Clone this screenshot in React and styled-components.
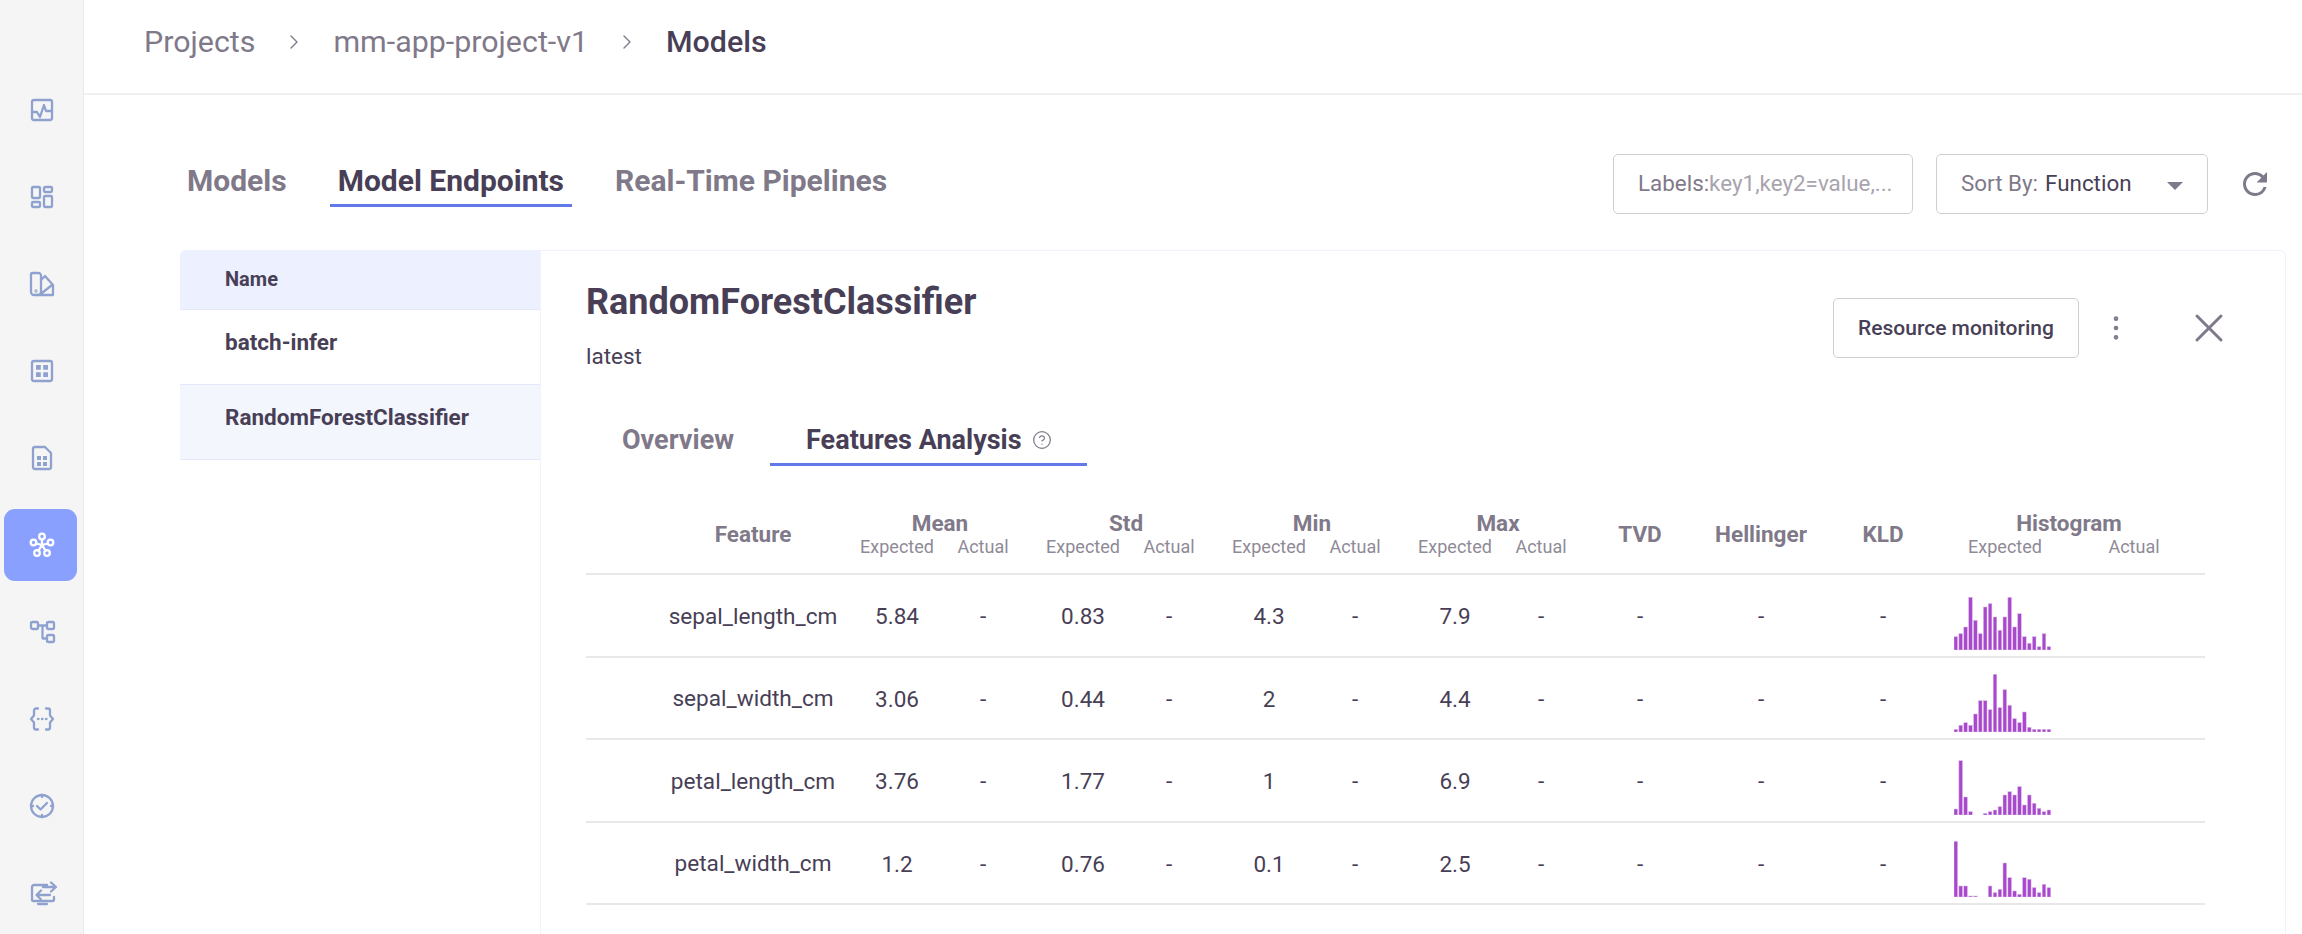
import styled, { createGlobalStyle } from "styled-components";
import { ChevronRight, CircleHelp, EllipsisVertical, X } from "lucide-react";

const GlobalStyle = createGlobalStyle`
	html, body {
		margin: 0;
		padding: 0;
		background: #fff;
	}
	body {
		font-family: Roboto, "Liberation Sans", sans-serif;
		color: #483f56;
	}
	* {
		box-sizing: border-box;
	}
`;

const navIcons = [
	<>
		<rect x="2" y="2" width="20" height="20" rx="2" />
		<path d="M3 14h4l3 5 4-12 2 6h5" />
	</>,
	<>
		<rect x="2" y="2" width="8" height="11" rx="1" />
		<rect x="14" y="2" width="8" height="5" rx="1" />
		<rect x="14" y="11" width="8" height="11" rx="1" />
		<rect x="2" y="17" width="8" height="5" rx="1" />
	</>,
	<>
		<path d="M2.500 1h6a2.500 2.500 0 0 1 2.500 2.500V20a3 3 0 0 1-3 3H4a3 3 0 0 1-3-3V2.500A1.500 1.500 0 0 1 2.500 1z" />
		<path d="M11 8l4-4 8 9v10H8M12 21l10-8" />
		<circle cx="6" cy="19" r=".5" />
	</>,
	<>
		<rect x="2" y="2" width="20" height="20" rx="2" />
		<path d="M6 6h4.800v4.800H6zM13.200 6H18v4.800h-4.800zM6 13.200h4.800V18H6zM13.200 13.200H18V18h-4.800z" fill="currentColor" stroke="none" />
	</>,
	<>
		<path d="M5 1h10l6 6v14a2 2 0 0 1-2 2H5a2 2 0 0 1-2-2V3a2 2 0 0 1 2-2z" />
		<path d="M7 10h4v4H7zM13 10h4v4h-4zM7 16h4v4H7zM13 16h4v4h-4z" fill="currentColor" stroke="none" />
	</>,
	<>
		<circle cx="12" cy="3.500" r="2.800" />
		<circle cx="3.500" cy="9.500" r="2.800" />
		<circle cx="20.500" cy="9.500" r="2.800" />
		<circle cx="7" cy="20" r="2.800" />
		<circle cx="17" cy="20" r="2.800" />
		<path d="M12 6v6M6 10.500l6 1.500 6-1.500M8.300 17.800 12 12l3.700 5.800" />
	</>,
	<>
		<rect x="1" y="2" width="7" height="7" rx="1.500" />
		<rect x="17" y="2" width="7" height="7" rx="1.500" />
		<rect x="17" y="15" width="7" height="7" rx="1.500" />
		<path d="M8 5.500h9M12.500 5.500V18a.5.5 0 0 0 .5.5h4" />
	</>,
	<>
		<path d="M8 1.500H6a2 2 0 0 0-2 2v5L1 12l3 3.500v5a2 2 0 0 0 2 2h2" />
		<path d="M16 1.500h2a2 2 0 0 1 2 2v5l3 3.500-3 3.500v5a2 2 0 0 1-2 2h-2" />
		<path d="M8 12h.5M12 12h.5M16 12h.5" />
	</>,
	<>
		<circle cx="12" cy="12" r="11" />
		<path d="M7 12l3.500 3.500L17 9M12 1v2M12 21v2M1 12h2M21 12h2" />
	</>,
	<>
		<path d="M17 4H4a2 2 0 0 0-2 2v13a1 1 0 0 0 1 1h20a1 1 0 0 0 1-1v-3" />
		<path d="M13 6h12M21 1.500 26 6l-5 4.500M20 14H7M11 9.500 6.500 14l4.500 4.500M8 23h9" />
	</>,
];

const rows = [
	{
		name: "sepal_length_cm",
		mean: "5.84",
		std: "0.83",
		min: "4.3",
		max: "7.9",
		bars: [13.3, 16.3, 23, 52.7, 29.7, 16.3, 43, 46.3, 33, 19.7, 33, 52.7, 23, 36.3, 13.3, 6.7, 13.3, 3.3, 16.3, 3.3],
	},
	{
		name: "sepal_width_cm",
		mean: "3.06",
		std: "0.44",
		min: "2",
		max: "4.4",
		bars: [2.7, 6.7, 9.3, 6.7, 18, 31.3, 31.3, 22.3, 57.7, 24.3, 42.3, 26.7, 13.3, 9.3, 20, 4.7, 2.7, 2.7, 2.7, 2.7],
	},
	{
		name: "petal_length_cm",
		mean: "3.76",
		std: "1.77",
		min: "1",
		max: "6.9",
		bars: [6, 54.3, 18, 3.3, 0, 0, 1.7, 3.3, 5, 8.3, 20, 23.3, 20, 28.3, 10, 20, 11.7, 6.7, 3.3, 5],
	},
	{
		name: "petal_width_cm",
		mean: "1.2",
		std: "0.76",
		min: "0.1",
		max: "2.5",
		bars: [55.7, 11, 11, 1, 1, 0, 0, 11, 4.3, 7.7, 34, 19.3, 6, 2.7, 19.3, 17.7, 9.3, 4.3, 12.7, 9.3],
	},
];

const groups = ["Mean", "Std", "Min", "Max"];

function Histogram({ bars }) {
	return (
		<HistogramSvg width="100" height="60" viewBox="0 0 100 60">
			{bars.map((h, i) =>
				h > 0 ? <rect key={i} x={i * 4.9} y={60 - h} width="3.6" height={h} /> : null
			)}
		</HistogramSvg>
	);
}

function App() {
	return (
		<Page>
			<GlobalStyle />
			<Sidebar>
				{navIcons.map((icon, i) => (
					<NavItem key={i} $active={i === 5}>
						<NavIcon viewBox="0 0 26 24">{icon}</NavIcon>
					</NavItem>
				))}
			</Sidebar>
			<Main>
				<Breadcrumbs>
					<Crumb>Projects</Crumb>
					<ChevronRight size={24} strokeWidth={1.4} />
					<Crumb>mm-app-project-v1</Crumb>
					<ChevronRight size={24} strokeWidth={1.4} />
					<Crumb $current>Models</Crumb>
				</Breadcrumbs>
				<Content>
					<TopBar>
						<Tabs>
							<Tab>Models</Tab>
							<Tab $active>Model Endpoints</Tab>
							<Tab>Real-Time Pipelines</Tab>
						</Tabs>
						<Filters>
							<LabelsBox>
								Labels:<Placeholder>key1,key2=value,...</Placeholder>
							</LabelsBox>
							<SortBox>
								Sort By: <SortValue>Function</SortValue>
								<Caret />
							</SortBox>
							<RefreshIcon viewBox="0 0 24 24">
								<path d="M17.65 6.35A7.958 7.958 0 0012 4c-4.420 0-7.990 3.580-7.990 8s3.570 8 7.990 8c3.730 0 6.840-2.550 7.730-6h-2.080A5.990 5.990 0 0112 18c-3.310 0-6-2.690-6-6s2.690-6 6-6c1.660 0 3.140.690 4.220 1.780L13 11h7V4l-2.350 2.350z" />
							</RefreshIcon>
						</Filters>
					</TopBar>
					<Body>
						<List>
							<ListHead>Name</ListHead>
							<ListRow>batch-infer</ListRow>
							<ListRow $selected>RandomForestClassifier</ListRow>
						</List>
						<Panel>
							<PanelHead>
								<div>
									<PanelTitle>RandomForestClassifier</PanelTitle>
									<PanelTag>latest</PanelTag>
								</div>
								<PanelActions>
									<OutlineButton>Resource monitoring</OutlineButton>
									<Kebab>
										<EllipsisVertical size={32} strokeWidth={1.5} />
									</Kebab>
									<CloseBtn>
										<X size={48} strokeWidth={1.5} />
									</CloseBtn>
								</PanelActions>
							</PanelHead>
							<DetailTabs>
								<DetailTab>Overview</DetailTab>
								<DetailTab $active>
									Features Analysis
									<CircleHelp size={20} strokeWidth={1.5} />
								</DetailTab>
							</DetailTabs>
							<Table>
								<HeadRow>
									<FeatureHead>Feature</FeatureHead>
									{groups.map((g) => (
										<Group key={g}>
											<GroupTitle>{g}</GroupTitle>
											<SubLabel>Expected</SubLabel>
											<SubLabel>Actual</SubLabel>
										</Group>
									))}
									<MetricHead $w={112}>TVD</MetricHead>
									<MetricHead $w={130}>Hellinger</MetricHead>
									<MetricHead $w={114}>KLD</MetricHead>
									<HistGroup>
										<GroupTitle>Histogram</GroupTitle>
										<SubLabel>Expected</SubLabel>
										<SubLabel>Actual</SubLabel>
									</HistGroup>
								</HeadRow>
								{rows.map((r) => (
									<Row key={r.name}>
										<FeatureCell>{r.name}</FeatureCell>
										{[r.mean, r.std, r.min, r.max].map((v, i) => (
											<Pair key={i}>
												<Cell>{v}</Cell>
												<Cell>-</Cell>
											</Pair>
										))}
										<Metric $w={112}>-</Metric>
										<Metric $w={130}>-</Metric>
										<Metric $w={114}>-</Metric>
										<Histogram bars={r.bars} />
									</Row>
								))}
							</Table>
						</Panel>
					</Body>
				</Content>
			</Main>
		</Page>
	);
}

export default App;

const Page = styled.div`
	display: flex;
	height: 934px;
	width: 2302px;
	overflow: hidden;
`;

const Sidebar = styled.nav`
	width: 84px;
	flex: none;
	background: #f5f5f5;
	border-right: 1px solid #e9e9e9;
	padding: 74px 0 0 4px;
	display: flex;
	flex-direction: column;
	gap: 15px;
`;

const NavItem = styled.div`
	width: 73px;
	height: 72px;
	padding-left: 5px;
	border-radius: 11px;
	display: flex;
	align-items: center;
	justify-content: center;
	color: ${(p) => (p.$active ? "#ffffff" : "#8fa2cf")};
	background: ${(p) => (p.$active ? "#8aa0ff" : "transparent")};
`;

const NavIcon = styled.svg`
	width: 26px;
	height: 24px;
	fill: none;
	stroke: currentColor;
	stroke-width: 2.300;
	stroke-linecap: round;
	stroke-linejoin: round;
	overflow: visible;
`;

const Main = styled.main`
	flex: 1;
	min-width: 0;
`;

const Breadcrumbs = styled.div`
	height: 95px;
	border-bottom: 2px solid #f0f0f0;
	padding: 0 0 10px 60px;
	display: flex;
	align-items: center;
	gap: 27px;
	color: #7f7989;
`;

const Crumb = styled.span`
	font-size: 30.400px;
	font-weight: ${(p) => (p.$current ? 500 : 400)};
	color: ${(p) => (p.$current ? "#483f56" : "#7f7989")};
`;

const Content = styled.div`
	padding: 0 16px 0 95px;
`;

const TopBar = styled.div`
	display: flex;
	justify-content: space-between;
	height: 155px;
	padding-top: 59px;
`;

const Tabs = styled.div`
	display: flex;
	gap: 35px;
	height: 54px;
`;

const Tab = styled.div`
	padding: 0 8px;
	font-size: 30px;
	font-weight: 700;
	line-height: 54px;
	height: 53px;
	color: ${(p) => (p.$active ? "#483f56" : "#7f7989")};
	border-bottom: ${(p) => (p.$active ? "3px solid #6279e8" : "none")};
`;

const Filters = styled.div`
	display: flex;
	gap: 23px;
	height: 60px;
	align-items: center;
	font-size: 22.400px;
`;

const LabelsBox = styled.div`
	width: 300px;
	height: 60px;
	border: 1px solid #d0ced3;
	border-radius: 5px;
	padding: 0 0 2px 24px;
	display: flex;
	align-items: center;
	color: #7f7989;
`;

const Placeholder = styled.span`
	color: #a8a4ae;
`;

const SortBox = styled.div`
	position: relative;
	width: 272px;
	height: 60px;
	border: 1px solid #d0ced3;
	border-radius: 5px;
	padding: 0 0 2px 24px;
	display: flex;
	align-items: center;
	gap: 7px;
	color: #7f7989;
`;

const SortValue = styled.span`
	color: #483f56;
`;

const Caret = styled.span`
	position: absolute;
	right: 24px;
	top: 27px;
	width: 0;
	height: 0;
	border-left: 8px solid transparent;
	border-right: 8px solid transparent;
	border-top: 8px solid #7f7989;
`;

const RefreshIcon = styled.svg`
	width: 36px;
	height: 36px;
	fill: #7f7989;
	margin: 0 13px 0 6px;
`;

const Body = styled.div`
	display: flex;
	margin-left: 1px;
	height: 690px;
`;

const List = styled.div`
	width: 360px;
	flex: none;
`;

const ListHead = styled.div`
	height: 60px;
	background: #edf0fe;
	border-bottom: 1px solid #e4e8fb;
	border-top-left-radius: 6px;
	padding-left: 45px;
	font-size: 20px;
	font-weight: 700;
	line-height: 58px;
	color: #483f56;
`;

const ListRow = styled.div`
	height: 75px;
	padding: 17px 0 0 45px;
	font-size: 22.500px;
	font-weight: 700;
	line-height: 30px;
	color: #483f56;
	border-bottom: 1px solid #e4e8fb;
	background: ${(p) => (p.$selected ? "#f4f6fe" : "#fff")};
`;

const Panel = styled.section`
	flex: 1;
	min-width: 0;
	border: 1px solid #f0f2fd;
	border-bottom: none;
	border-radius: 0 6px 0 0;
	padding: 0 0 0 45px;
`;

const PanelHead = styled.div`
	display: flex;
	justify-content: space-between;
	height: 166px;
	padding-top: 29px;
`;

const PanelTitle = styled.h2`
	margin: 0;
	font-size: 36px;
	font-weight: 700;
	line-height: 44px;
	color: #483f56;
`;

const PanelTag = styled.div`
	margin-top: 18px;
	font-size: 22.500px;
	line-height: 28px;
	color: #483f56;
`;

const PanelActions = styled.div`
	display: flex;
	align-items: center;
	height: 60px;
	margin-top: 18px;
	padding-right: 52px;
`;

const OutlineButton = styled.div`
	width: 246px;
	height: 60px;
	border: 1px solid #d0ced3;
	border-radius: 5px;
	display: flex;
	align-items: center;
	justify-content: center;
	font-size: 21px;
	font-weight: 500;
	color: #483f56;
`;

const Kebab = styled.div`
	width: 50px;
	margin-left: 12px;
	display: flex;
	justify-content: center;
	color: #7f7989;
`;

const CloseBtn = styled.div`
	margin-left: 44px;
	display: flex;
	color: #7f7989;
`;

const DetailTabs = styled.div`
	display: flex;
	height: 49px;
	margin-left: 9px;
`;

const DetailTab = styled.div`
	display: flex;
	align-items: flex-start;
	gap: 10px;
	padding: 6px ${(p) => (p.$active ? "35px 0 36px" : "27px 0")};
	margin-right: ${(p) => (p.$active ? "0" : "9px")};
	font-size: 27px;
	font-weight: 700;
	line-height: 34px;
	color: ${(p) => (p.$active ? "#483f56" : "#7f7989")};
	border-bottom: ${(p) => (p.$active ? "3px solid #6279e8" : "none")};

	svg {
		margin-top: 7px;
		color: #7f7989;
	}
`;

const Table = styled.div`
	width: 1619px;
	margin-top: 44px;
`;

const HeadRow = styled.div`
	display: flex;
	height: 65px;
	border-bottom: 2px solid #e8e8e8;
`;

const FeatureHead = styled.div`
	width: 268px;
	padding-left: 66px;
	text-align: center;
	font-size: 22.500px;
	font-weight: 700;
	color: #7f7989;
	line-height: 48px;
`;

const Group = styled.div`
	width: 172px;
	margin-right: 14px;
	display: grid;
	grid-template-columns: 1fr 1fr;
	align-content: start;
	&:nth-child(5) {
		margin-right: 0;
	}
`;

const HistGroup = styled.div`
	width: 265px;
	display: grid;
	grid-template-columns: 130px 128px;
	align-content: start;
`;

const GroupTitle = styled.div`
	grid-column: 1 / -1;
	text-align: center;
	font-size: 22.500px;
	font-weight: 700;
	line-height: 26px;
	color: #7f7989;
`;

const SubLabel = styled.div`
	text-align: center;
	font-size: 18px;
	line-height: 22px;
	color: #8f8a97;
`;

const MetricHead = styled.div`
	width: ${(p) => p.$w}px;
	text-align: center;
	font-size: 22.500px;
	font-weight: 700;
	line-height: 48px;
	color: #7f7989;
`;

const Row = styled.div`
	position: relative;
	display: flex;
	align-items: center;
	height: 82.500px;
	padding-top: 2px;
	border-bottom: 2px solid #e8e8e8;
`;

const FeatureCell = styled.div`
	width: 268px;
	padding-left: 66px;
	text-align: center;
	font-size: 22.600px;
	color: #483f56;
`;

const Pair = styled.div`
	width: 172px;
	margin-right: 14px;
	display: grid;
	grid-template-columns: 1fr 1fr;
	&:nth-child(5) {
		margin-right: 0;
	}
`;

const Cell = styled.div`
	text-align: center;
	font-size: 22.500px;
	color: #483f56;
`;

const Metric = styled.div`
	width: ${(p) => p.$w}px;
	text-align: center;
	font-size: 22.500px;
	color: #483f56;
`;

const HistogramSvg = styled.svg`
	align-self: flex-end;
	margin: 0 0 6px 14px;
	fill: #a848cc;
	stroke: #dcb9ea;
	stroke-width: 0.5;
`;
